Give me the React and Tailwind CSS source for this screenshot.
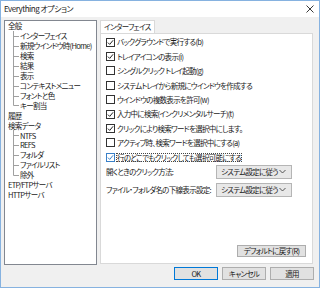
import React from "react";

const tree = [
  { t: "全般", l: 0 },
  { t: "インターフェイス", l: 1 },
  { t: "新規ウインドウ時(Home)", l: 1 },
  { t: "検索", l: 1 },
  { t: "結果", l: 1 },
  { t: "表示", l: 1 },
  { t: "コンテキストメニュー", l: 1 },
  { t: "フォントと色", l: 1 },
  { t: "キー割当", l: 1, last: true },
  { t: "履歴", l: 0 },
  { t: "検索データ", l: 0 },
  { t: "NTFS", l: 1 },
  { t: "REFS", l: 1 },
  { t: "フォルダ", l: 1 },
  { t: "ファイルリスト", l: 1 },
  { t: "除外", l: 1, last: true },
  { t: "ETP/FTPサーバ", l: 0 },
  { t: "HTTPサーバ", l: 0 },
];

const checks = [
  { t: "バックグラウンドで実行する(b)", c: true },
  { t: "トレイアイコンの表示(i)", c: true },
  { t: "シングルクリック トレイ起動(g)", c: false },
  { t: "システムトレイから新規にウインドウを作成する", c: false },
  { t: "ウインドウの複数表示を許可(w)", c: false },
  { t: "入力中に検索(インクリメンタルサーチ)(t)", c: true },
  { t: "クリックにより検索ワードを選択中にします。", c: true },
  { t: "アクティブ時、検索ワードを選択中にする(a)", c: false },
  { t: "行のどこでもクリックしても選択可能にする", c: true, focus: true },
];

function Check({ c, focus }) {
  return (
    <span
      className={`w-[9px] h-[9px] shrink-0 bg-white border flex items-center justify-center ${
        focus ? "border-[#3a80c8]" : "border-[#333333]"
      }`}
    >
      {c && (
        <svg width="7" height="7" viewBox="0 0 7 7">
          <path d="M0.9 3.6 L2.7 5.4 L6.1 1.3" fill="none" stroke={focus ? "#3a80c8" : "#222"} strokeWidth="1" />
        </svg>
      )}
    </span>
  );
}

function Select() {
  return (
    <div className="w-[76px] h-[14px] bg-[#e8e8e8] border border-[#b5b5b5] flex items-center justify-between pl-[4px] pr-[5px]">
      <span className="whitespace-nowrap">システム設定に従う</span>
      <svg width="7" height="5" viewBox="0 0 7 5">
        <path d="M0.5 1 L3.5 4 L6.5 1" fill="none" stroke="#444" strokeWidth="0.9" />
      </svg>
    </div>
  );
}

function Btn({ children, primary, w = "w-[44px]", h = "h-[13px]" }) {
  return (
    <div
      className={`${w} ${h} bg-[#e1e1e1] border flex items-center justify-center whitespace-nowrap ${
        primary ? "border-[#0078d7]" : "border-[#adadad]"
      }`}
    >
      {children}
    </div>
  );
}

export default function App() {
  return (
    <div className="w-[320px] h-[288px] bg-[#f0f0f0] border border-[#86b2e0] flex flex-col font-['Noto_Sans_CJK_JP',sans-serif] [font-feature-settings:'palt'] text-[7.5px] tracking-[-0.7px] leading-none text-[#1a1a1a] overflow-hidden">
      <div className="h-[16px] bg-white flex items-center justify-between pl-[3px] pr-[5px] shrink-0">
        <span className="text-[8px] tracking-[-0.5px]">Everything オプション</span>
        <svg width="8" height="8" viewBox="0 0 8 8">
          <path d="M0.5 0.5 L7.5 7.5 M7.5 0.5 L0.5 7.5" stroke="#222" strokeWidth="0.9" />
        </svg>
      </div>
      <div className="flex pl-[3px] pt-[3px] gap-[3px]">
        <div className="w-[93px] h-[245px] bg-white border border-[#828790] pl-[2px] flex flex-col">
          {tree.map((it, i) => (
            <div key={i} className="h-[9.95px] flex items-center">
              {it.l === 1 && (
                <svg width="11" height="10" viewBox="0 0 11 10" className="shrink-0 ml-[1px]">
                  <path
                    d={it.last ? "M5.5 0 V5.5 H11" : "M5.5 0 V10 M5.5 5.5 H11"}
                    fill="none"
                    stroke="#a0a0a0"
                    strokeWidth="1"
                  />
                </svg>
              )}
              <span className="whitespace-nowrap pl-[1px]">{it.t}</span>
            </div>
          ))}
        </div>
        <div className="flex flex-col w-[213px]">
          <div className="flex">
            <div className="h-[13px] px-[3px] bg-white border border-b-0 border-[#d9d9d9] flex items-center justify-center whitespace-nowrap">
              インターフェイス
            </div>
          </div>
          <div className="h-[231px] bg-white border border-[#d9d9d9] pl-[5px] pt-[1px] flex flex-col">
            {checks.map((c, i) => (
              <div key={i} className="h-[14.4px] flex items-center gap-[1px] whitespace-nowrap">
                <Check c={c.c} focus={c.focus} />
                <span className={c.focus ? "outline outline-1 outline-dotted outline-[#444] -outline-offset-1 px-[1px] py-[1px]" : "pl-[1px]"}>{c.t}</span>
              </div>
            ))}
            <div className="flex items-center h-[14px]">
              <span className="w-[110px]">開くときのクリック方法:</span>
              <Select />
            </div>
            <div className="flex items-center mt-[4px] h-[14px]">
              <span className="w-[110px] whitespace-nowrap">ファイル・フォルダ名の下線表示設定:</span>
              <Select />
            </div>
            <div className="flex-1" />
            <div className="flex justify-end pr-[6px] pb-[6px]">
              <Btn w="w-[69px]" h="h-[12px]">デフォルトに戻す(R)</Btn>
            </div>
          </div>
        </div>
      </div>
      <div className="flex justify-end gap-[4px] pr-[5px] pt-[2px]">
        <Btn primary>OK</Btn>
        <Btn>キャンセル</Btn>
        <Btn>適用</Btn>
      </div>
    </div>
  );
}
